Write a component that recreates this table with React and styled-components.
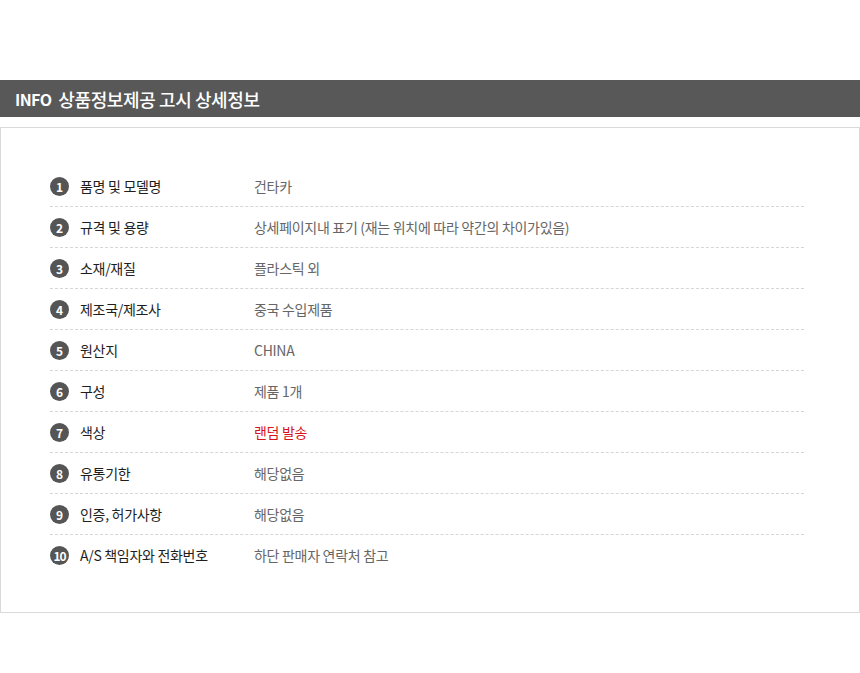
import React from 'react';
import styled, { createGlobalStyle } from 'styled-components';

const GlobalStyle = createGlobalStyle`
    body {
        margin: 0;
        background: #fff;
        font-family: "Noto Sans CJK KR", "Noto Sans", sans-serif;
    }
`;

const Page = styled.div`
    padding-top: 80px;
    width: 860px;
`;

const TitleBar = styled.h2`
    margin: 0;
    height: 37px;
    background-color: #585858;
    color: #fff;
    display: flex;
    align-items: center;
    padding-left: 15px;
    font-size: 18px;
    font-weight: 500;
    letter-spacing: -0.4px;
`;

const TitleTag = styled.span`
    font-size: 16px;
    font-weight: 700;
    letter-spacing: -0.6px;
    margin-right: 7px;
`;

const InfoBox = styled.div`
    margin-top: 10px;
    border: 1px solid #d9d9d9;
    box-sizing: border-box;
    width: 860px;
    padding: 38px 55px 36px 49px;
`;

const Row = styled.div`
    display: flex;
    align-items: center;
    height: 40px;
    border-bottom: ${(props) => (props.last ? '1px solid transparent' : '1px dashed #d6d6d6')};
    font-size: 14px;
    letter-spacing: -0.3px;
`;

const Num = styled.span`
    width: 19px;
    height: 19px;
    border-radius: 50%;
    background-color: #555;
    color: #fff;
    font-size: 12px;
    font-weight: 700;
    letter-spacing: ${(props) => (props.wide ? '-1px' : '0')};
    display: flex;
    align-items: center;
    justify-content: center;
    flex-shrink: 0;
    margin-right: 11px;
`;

const Label = styled.span`
    width: 174px;
    color: #1e1e1e;
`;

const Value = styled.span`
    color: ${(props) => (props.highlight ? '#d7141e' : '#666')};
`;

const ITEMS = [
    ['품명 및 모델명', '건타카'],
    ['규격 및 용량', '상세페이지내 표기 (재는 위치에 따라 약간의 차이가있음)'],
    ['소재/재질', '플라스틱 외'],
    ['제조국/제조사', '중국 수입제품'],
    ['원산지', 'CHINA'],
    ['구성', '제품 1개'],
    ['색상', '랜덤 발송', true],
    ['유통기한', '해당없음'],
    ['인증, 허가사항', '해당없음'],
    ['A/S 책임자와 전화번호', '하단 판매자 연락처 참고'],
];

const App = () => (
    <Page>
        <GlobalStyle />
        <TitleBar><TitleTag>INFO</TitleTag>상품정보제공 고시 상세정보</TitleBar>
        <InfoBox>
            {ITEMS.map(([label, value, highlight], i) => (
                <Row key={label} last={i === ITEMS.length - 1}>
                    <Num wide={i >= 9}>{i + 1}</Num>
                    <Label>{label}</Label>
                    <Value highlight={highlight}>{value}</Value>
                </Row>
            ))}
        </InfoBox>
    </Page>
);

export default App;
